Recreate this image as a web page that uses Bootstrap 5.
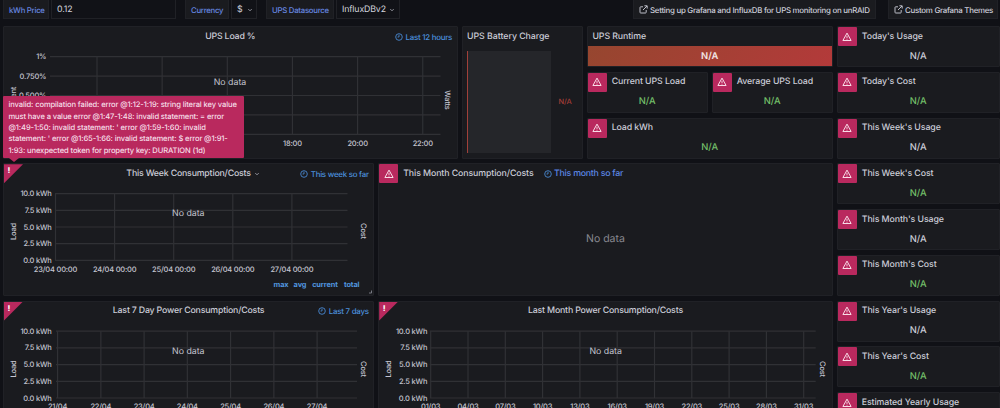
<!DOCTYPE html>
<html lang="en" data-bs-theme="dark">
<head>
<meta charset="utf-8">
<title>UPS Dashboard</title>
<link href="https://cdn.jsdelivr.net/npm/bootstrap@5.3.0/dist/css/bootstrap.min.css" rel="stylesheet">
<style>
body{width:1000px;height:408px;overflow:hidden;background:#101116;color:#cbccd7;font:500 8.8px/12px Inter,"Liberation Sans",sans-serif;text-rendering:geometricPrecision}
.topbar{height:26px;padding-left:3px;align-items:flex-start}
.ctl{height:18.5px;border:1px solid #202126;border-top:0;white-space:nowrap;display:flex;align-items:center;padding:1.5px 0 0 5px;flex:none}
.ctl svg{flex:none}
.ctl.fill{background:#1a1b1f;font-size:7.9px;letter-spacing:-.27px}
.ctl.fill svg{margin-right:2px}
.ctl.lbl{background:#1a1b1f;color:#6687e0;font-size:7.8px;letter-spacing:-.27px}
.ctl.val{background:#111217;font-size:8.8px;font-weight:400;color:#d2d3dd;letter-spacing:-.15px}
.dash{display:grid;grid-template-columns:repeat(24,37.7px);grid-auto-rows:41px;gap:4.75px 4px;margin-left:3px;height:382px;overflow:hidden}
.panel{background:#1a1b1f;border:1px solid #202126;border-radius:1px;position:relative;overflow:hidden;min-width:0;min-height:0;display:flex;flex-direction:column}
.head{height:19px;flex:none;white-space:nowrap;display:flex;align-items:center;letter-spacing:-.1px}
.head.justify-content-center{letter-spacing:-.2px}
.when{color:#4b8fdc;font-size:7.9px;display:flex;align-items:center;gap:2.5px;letter-spacing:-.25px}
.warn{width:19px;height:19px;background:#b9295e;border-radius:1px;flex:none;display:flex;align-items:center;justify-content:center;margin-right:5px}
.na{flex:1;display:flex;align-items:center;justify-content:center;font-size:9.4px;padding-top:1.2px}
.good{color:#73bf69}
.corner{position:absolute;left:0;top:0;width:19px;height:19px;background:#b9295e;clip-path:polygon(0 0,100% 0,0 100%);color:#fff;font-size:8px;font-weight:800;line-height:12px;padding-left:3.5px}
.plot{display:block;flex:none}
.plot line{stroke:#303135;stroke-width:1.2}
.plot text{fill:#c4c5d0;font-size:7.5px;font-weight:500;letter-spacing:-.2px}
.plot .nd{font-size:8.8px;font-weight:400;letter-spacing:0}
.plot .leg{fill:#5195df;font-weight:700;font-size:7.4px;letter-spacing:-.12px}
.runtime{background:linear-gradient(120deg,#96462f,#b33a3a);color:#f3e6e5;height:20px;flex:none;font-weight:600}
.tip{position:absolute;left:3px;top:96px;width:240.5px;height:62.4px;background:#b9295e;border-radius:1px;color:#f6dfe8;font-size:7.6px;letter-spacing:-.13px;line-height:11.35px;padding:3.2px 0 0 5.5px;white-space:nowrap}
.tip::after{content:"";position:absolute;left:5.5px;top:62px;border:5px solid transparent;border-top:4px solid #b9295e;border-bottom:0}
</style>
</head>
<body>
<svg class="d-none">
 <symbol id="warn" viewBox="0 0 10 10"><path d="M5 1.1 9.1 8.5H.9Z" fill="none" stroke="#f8dce7" stroke-width="1" stroke-linejoin="round"/><path d="M5 3.8v2.3M5 6.8v.8" stroke="#f8dce7" stroke-width=".9"/></symbol>
 <symbol id="clock" viewBox="0 0 8 8"><circle cx="4" cy="4" r="3.3" fill="none" stroke="#4b8fdc" stroke-width=".85"/><path d="M4 1.8V4H2.5" fill="none" stroke="#4b8fdc" stroke-width=".8"/></symbol>
 <symbol id="ext" viewBox="0 0 9 9"><path d="M4 1.8H1.7Q1 1.8 1 2.5v4.8Q1 8 1.7 8h4.8q.7 0 .7-.7V5M5.4.8h2.8v2.8M8 1 4 5" fill="none" stroke="#c6c7d2" stroke-width=".95"/></symbol>
 <symbol id="chev" viewBox="0 0 6 6"><path d="m1.3 2.1 1.7 1.7 1.7-1.7" fill="none" stroke="#a9aab5" stroke-width=".85"/></symbol>
</svg>

<div class="topbar d-flex">
 <div class="ctl lbl" style="width:46px">kWh Price</div>
 <div class="ctl val" style="width:125px;margin-left:2px">0.12</div>
 <div class="ctl lbl" style="width:44px;margin-left:9px">Currency</div>
 <div class="ctl val" style="width:26px;margin-left:2px">$<svg width="6" height="6" class="ms-1"><use href="#chev"/></svg></div>
 <div class="ctl lbl" style="width:68px;margin-left:9px">UPS Datasource</div>
 <div class="ctl val" style="width:64px;margin-left:2px">InfluxDBv2<svg width="6" height="6" style="margin-left:3px"><use href="#chev"/></svg></div>
 <div class="ctl fill" style="width:243px;margin-left:233px"><svg width="9" height="9"><use href="#ext"/></svg>Setting up Grafana and InfluxDB for UPS monitoring on unRAID</div>
 <div class="ctl fill" style="width:110px;margin-left:12px"><svg width="9" height="9"><use href="#ext"/></svg>Custom Grafana Themes</div>
</div>

<main class="dash" id="dash">
 <section class="panel" style="grid-area:1/1/span 3/span 11">
  <div class="head justify-content-center"><span>UPS Load %</span><span class="when position-absolute" style="right:4.5px"><svg width="8" height="8"><use href="#clock"/></svg>Last 12 hours</span></div>
  <svg class="plot" data-plot="load"></svg>
 </section>
 <section class="panel" style="grid-area:1/12/span 3/span 3">
  <div class="head" style="padding-left:4.5px;letter-spacing:-.05px">UPS Battery Charge</div>
  <div class="d-flex align-items-center" style="margin:4.5px 0 0 4px;height:102px">
   <div class="h-100" style="width:84px;background:#25262a;border-left:1px solid #a1403a"></div>
   <div class="flex-grow-1 text-center" style="font-size:7.4px;color:#a63e38;padding-right:2px">N/A</div>
  </div>
 </section>
 <section class="panel" style="grid-area:1/15/span 1/span 6">
  <div class="head" style="padding-left:4.8px">UPS Runtime</div>
  <div class="na runtime">N/A</div>
 </section>
 <section class="panel" style="grid-area:4/1/span 3/span 9">
  <div class="corner">!</div>
  <div class="head justify-content-center" style="padding-left:9px"><span>This Week Consumption/Costs</span><svg width="6" height="6" style="margin-left:3px"><use href="#chev"/></svg><span class="when position-absolute" style="right:4.5px"><svg width="8" height="8"><use href="#clock"/></svg>This week so far</span></div>
  <svg class="plot" data-plot="week"></svg>
 </section>
 <section class="panel" style="grid-area:4/10/span 3/span 11">
  <div class="head"><span class="warn"><svg width="10" height="10"><use href="#warn"/></svg></span><span>This Month Consumption/Costs</span><span class="when" style="margin-left:10px;font-size:8.8px;color:#5a86e4"><svg width="8" height="8"><use href="#clock"/></svg>This month so far</span></div>
  <div class="flex-grow-1 d-flex justify-content-center align-items-center" style="font-size:10.5px;font-weight:400;color:#87888f"><span>No data</span></div>
 </section>
 <section class="panel" style="grid-area:7/1/span 3/span 9">
  <div class="corner">!</div>
  <div class="head justify-content-center"><span>Last 7 Day Power Consumption/Costs</span><span class="when position-absolute" style="right:4.5px"><svg width="8" height="8"><use href="#clock"/></svg>Last 7 days</span></div>
  <svg class="plot" data-plot="days"></svg>
 </section>
 <section class="panel" style="grid-area:7/10/span 3/span 11">
  <div class="corner">!</div>
  <div class="head justify-content-center"><span>Last Month Power Consumption/Costs</span></div>
  <svg class="plot" data-plot="month"></svg>
 </section>
</main>

<div class="tip" role="tooltip">invalid: compilation failed: error @1:12-1:19: string literal key value<br>must have a value error @1:47-1:48: invalid statement: = error<br>@1:49-1:50: invalid statement: ' error @1:59-1:60: invalid<br>statement: ' error @1:65-1:66: invalid statement: $ error @1:91-<br>1:93: unexpected token for property key: DURATION (1d)</div>

<script>
// Stat panels: title, grid area, green value or neutral
const stats = [
 ['Current UPS Load','2/15/span 1/span 3',1],['Average UPS Load','2/18/span 1/span 3',1],['Load kWh','3/15/span 1/span 6',1],
 ...[["Today's Usage",0],["Today's Cost",1],["This Week's Usage",0],["This Week's Cost",1],["This Month's Usage",0],["This Month's Cost",1],["This Year's Usage",0],["This Year's Cost",1],["Estimated Yearly Usage",null]]
  .map(([t,g],i)=>[t,`${i+1}/21/span 1/span 4`,g])
];
document.getElementById('dash').insertAdjacentHTML('beforeend', stats.map(([t,a,g])=>
 `<section class="panel" style="grid-area:${a}"><div class="head"><span class="warn"><svg width="10" height="10"><use href="#warn"/></svg></span>${t}</div>${g===null?'':`<div class="na ${g?'good':''}">N/A</div>`}</section>`).join(''));

// Graph axes, in dashboard coordinates; box is the viewBox origin of each plot
const kwh=['10.0 kWh','7.5 kWh','5.0 kWh','2.5 kWh','0.0 kWh'];
const plots={
 load:{box:[4,46,452,111],x:[50,440.5],y:[56.7,19.4],v:[97,65.15],xl:['','','','18:00','20:00','22:00'],yl:['1%','0.750%','0.500%','',''],yr:46.3,left:['Percent',13.5,100],right:['Watts',447,100],nd:[230,82.9],xy:143.7},
 week:{box:[4,183,369,111],x:[55,347.5],y:[193.6,16.7],v:[55.5,59.1],xl:['23/04 00:00','24/04 00:00','25/04 00:00','26/04 00:00','27/04 00:00'],yl:kwh,yr:51.7,left:['Load',13.5,231.5],right:['Cost',363.5,231],nd:[188.3,213.9],xy:269.3,leg:1},
 days:{box:[4,320.5,369,111],x:[56,357],y:[330.7,16.7],v:[57.6,43.25],xl:['21/04','22/04','23/04','24/04','25/04','26/04','27/04'],yl:kwh,yr:51.7,left:['Load',13.5,368.5],right:['Cost',363.5,368.5],nd:[188.3,351],xy:406},
 month:{box:[379.3,320.5,452,111],x:[430,816],y:[330.7,16.7],v:[431,37.3],xl:['01/03','04/03','07/03','10/03','13/03','16/03','19/03','22/03','25/03','28/03','31/03'],yl:kwh,yr:427.5,left:['Load',389,368.5],right:['Cost',822.5,368.5],nd:[606,351],xy:406}
};
for(const svg of document.querySelectorAll('[data-plot]')){
 const p=plots[svg.dataset.plot],[y0,dy]=p.y,[v0,dv]=p.v,b=y0+4*dy;
 svg.setAttribute('viewBox',p.box.join(' '));svg.setAttribute('width',p.box[2]);svg.setAttribute('height',p.box[3]);
 const T=(s,x,y,a='middle',c='',r=0)=>s&&`<text class="${c}" x="${x}" y="${y}" text-anchor="${a}" dominant-baseline="central"${r?` transform="rotate(${r} ${x} ${y})"`:''}>${s}</text>`;
 let o='';
 p.yl.forEach((s,i)=>{const y=y0+i*dy;o+=`<line x1="${p.x[0]}" x2="${p.x[1]}" y1="${y}" y2="${y}"/>`+T(s,p.yr,y,'end')});
 p.xl.forEach((s,i)=>{const x=v0+i*dv;o+=`<line x1="${x}" x2="${x}" y1="${y0}" y2="${b}"/>`+T(s,x,p.xy)});
 o+=T(...p.left,'middle','',-90)+T(...p.right,'middle','',90)+T('No data',...p.nd,'middle','nd');
 if(p.leg)o+=[['max',281],['avg',300],['current',325],['total',351.7]].map(l=>T(l[0],l[1],284,'middle','leg')).join('')+'<path d="M371.5 290.5v2.5h-2.5" fill="none" stroke="#777982" stroke-width="1"/>';
 svg.innerHTML=o;
}
</script>
<script src="https://cdn.jsdelivr.net/npm/bootstrap@5.3.0/dist/js/bootstrap.bundle.min.js"></script>
</body>
</html>
